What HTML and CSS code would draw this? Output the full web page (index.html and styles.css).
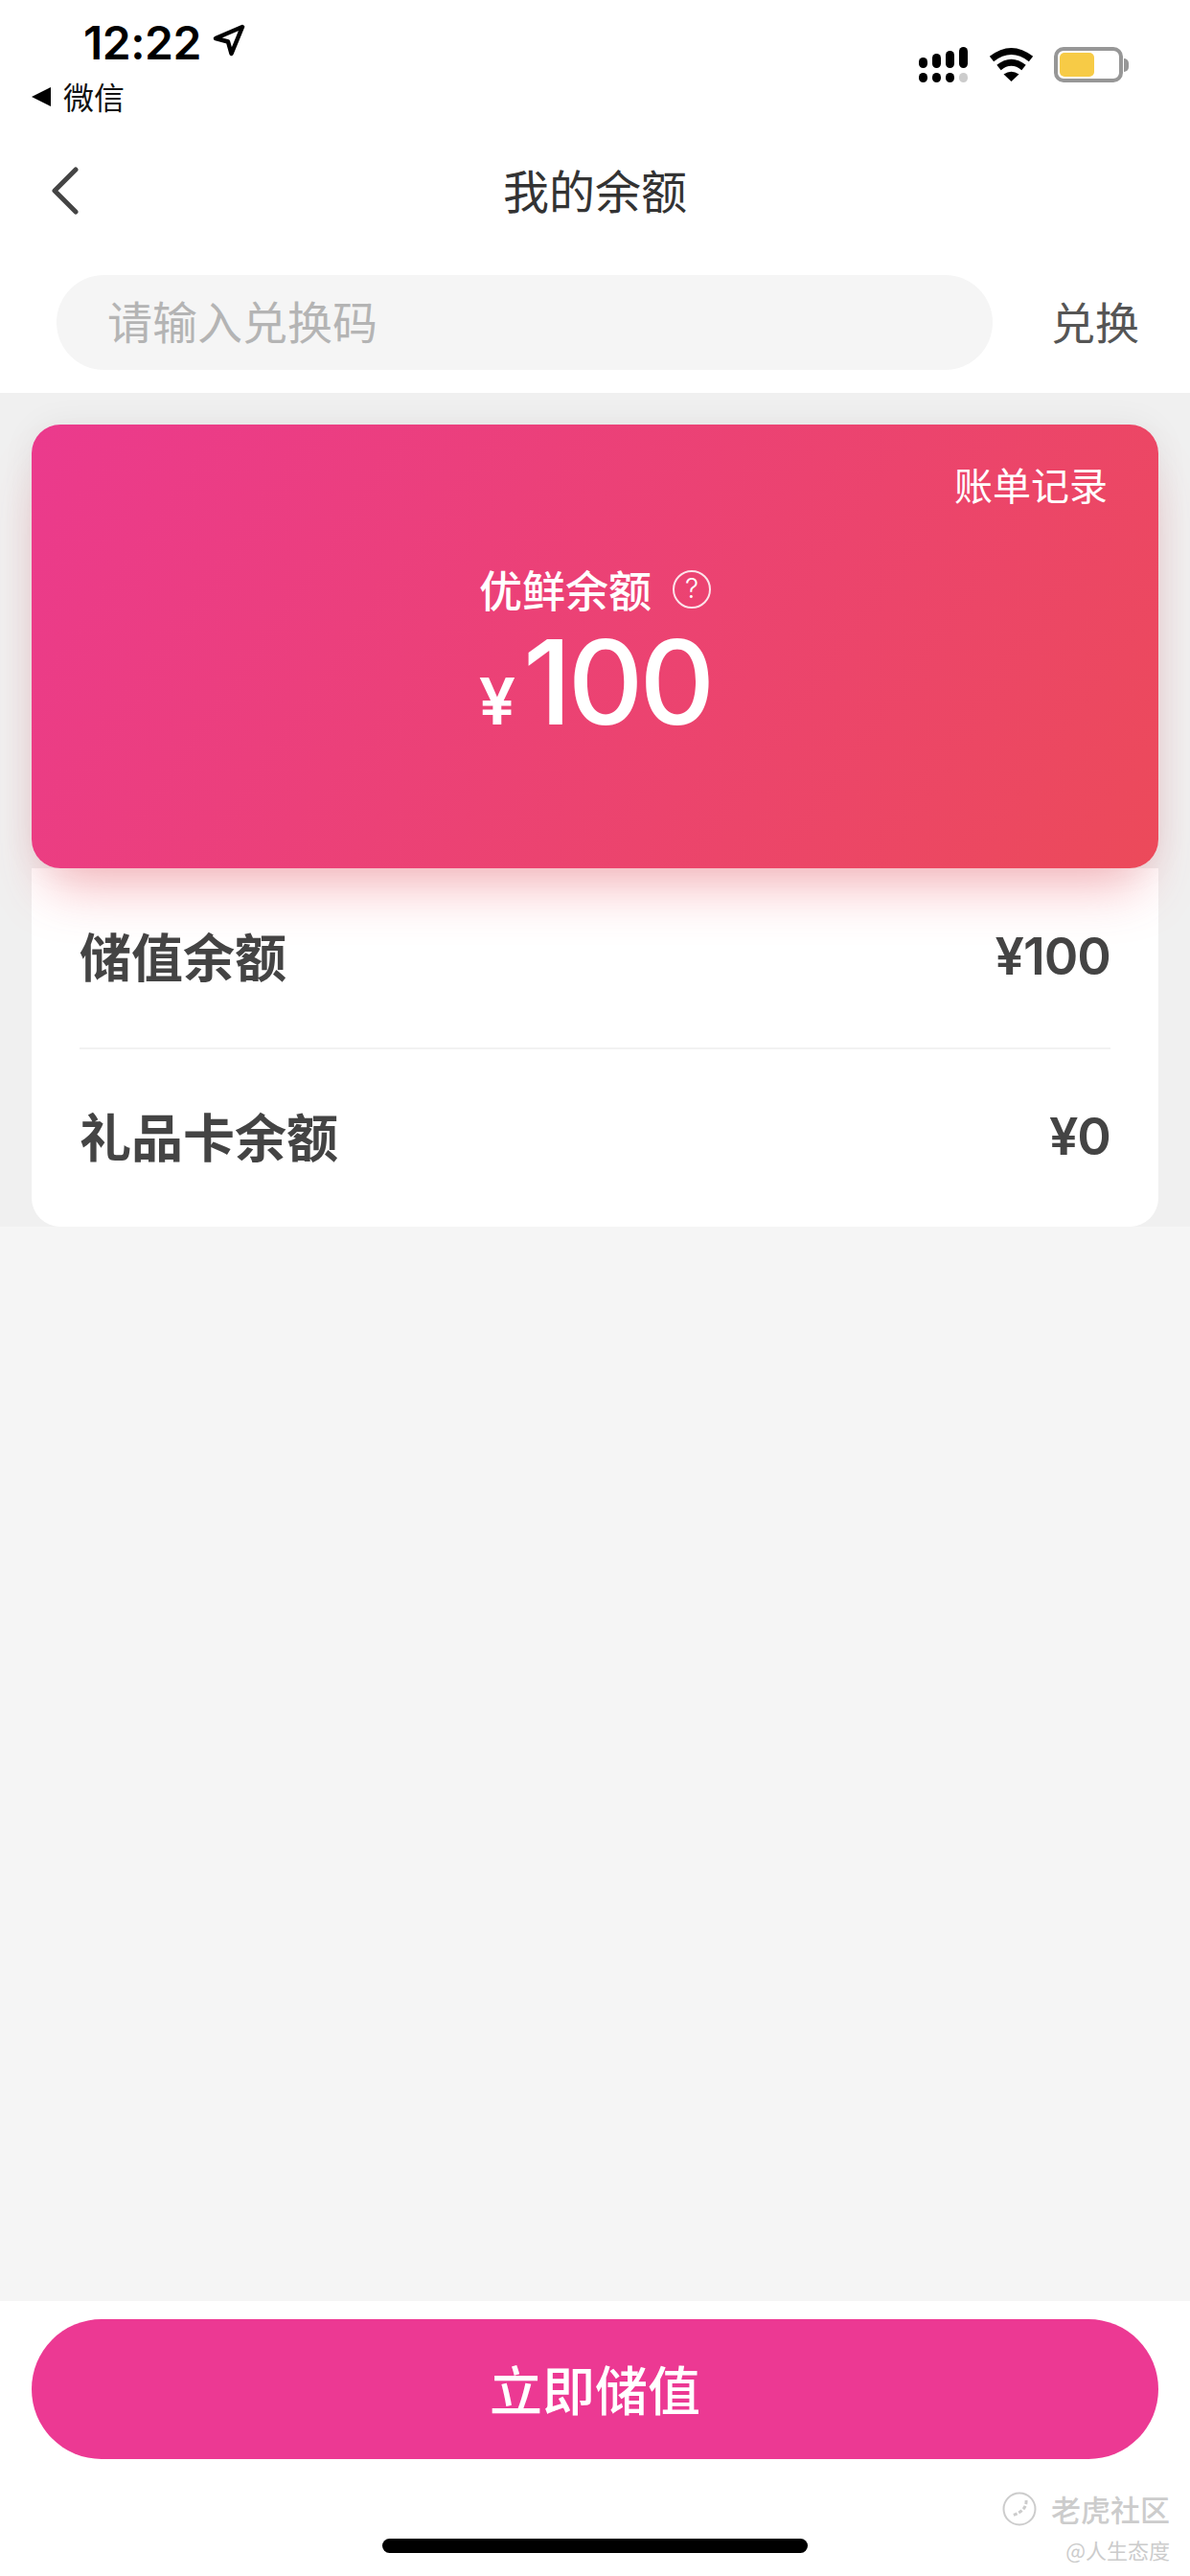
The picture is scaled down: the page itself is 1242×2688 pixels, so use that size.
FILE: index.html
```html
<!DOCTYPE html>
<html lang="zh-CN">
<head>
  <meta charset="UTF-8" />
  <meta name="viewport" content="width=device-width, initial-scale=1" />
  <title>我的余额</title>
  <link rel="stylesheet" href="styles.css">
</head>
<body>
  <div class="page">
    <header class="top">
      <div class="status">
        <div class="status-left">
          <div class="time-row">
            <span class="time">12:22</span>
            <svg class="arrow" width="34" height="34" viewBox="0 0 34 34"><path d="M31 3 L3 15 L16 18.5 L19.5 31 Z" fill="none" stroke="#000" stroke-width="4.5" stroke-linejoin="round"/></svg>
          </div>
          <div class="back-app">
            <span class="back-tri"></span>
            <span>微信</span>
          </div>
        </div>
        <div class="status-right">
          <svg width="51" height="37" viewBox="0 0 51 37">
            <rect x="0" y="11" width="9" height="11" rx="4.5"/>
            <rect x="14" y="7" width="9" height="15" rx="4.5"/>
            <rect x="28" y="4" width="9" height="18" rx="4.5"/>
            <rect x="42" y="0" width="9" height="22" rx="4.5"/>
            <rect x="0" y="27" width="9" height="10" rx="4.5"/>
            <rect x="14" y="27" width="9" height="10" rx="4.5"/>
            <rect x="28" y="27" width="9" height="10" rx="4.5"/>
            <rect x="42" y="27" width="9" height="10" rx="4.5" fill="#ccc"/>
          </svg>
          <svg width="47" height="36" viewBox="0 0 47 36">
            <path d="M3 12.5 Q23.5 -3.5 44 12.5" fill="none" stroke="#000" stroke-width="7"/>
            <path d="M10.5 21.5 Q23.5 11 36.5 21.5" fill="none" stroke="#000" stroke-width="7"/>
            <path d="M23.5 36 L15.5 28.5 Q23.5 23 31.5 28.5 Z"/>
          </svg>
          <div class="battery">
            <div class="battery-body"><div class="battery-fill"></div></div>
            <div class="battery-nub"></div>
          </div>
        </div>
      </div>

      <nav class="nav">
        <svg class="back" width="28" height="50" viewBox="0 0 28 50"><path d="M25 3 L3 25 L25 47" fill="none" stroke="#444" stroke-width="5" stroke-linecap="round" stroke-linejoin="round"/></svg>
        <h1 class="nav-title">我的余额</h1>
        <span></span>
      </nav>

      <div class="redeem">
        <div class="redeem-input">请输入兑换码</div>
        <span class="redeem-btn">兑换</span>
      </div>
    </header>

    <section class="balance">
      <div class="card">
        <div class="card-link">账单记录</div>
        <div class="card-label"><span>优鲜余额</span><span class="help">?</span></div>
        <div class="card-amount"><span class="yen">¥</span><span class="num">100</span></div>
      </div>
      <div class="details">
        <div class="row">
          <span class="row-name">储值余额</span>
          <span class="row-value">¥100</span>
        </div>
        <div class="row">
          <span class="row-name">礼品卡余额</span>
          <span class="row-value">¥0</span>
        </div>
      </div>
    </section>

    <main class="empty"></main>

    <footer class="bottom">
      <button class="charge-btn">立即储值</button>
      <div class="home-bar"></div>
    </footer>

    <div class="watermark">
      <div class="wm-main">
        <svg width="36" height="36" viewBox="0 0 36 36"><circle cx="18" cy="18" r="16.5" fill="none" stroke="#ccc" stroke-width="2"/><path d="M25 9 Q26 20 10 25" fill="none" stroke="#ccc" stroke-width="3" stroke-dasharray="4 2"/></svg>
        <span>老虎社区</span>
      </div>
      <div class="wm-user">@人生态度</div>
    </div>
  </div>
</body>
</html>
```

FILE: styles.css
```css
* {
  box-sizing: border-box;
}
body {
  margin: 0;
  font-family: "Noto Sans CJK SC", "Noto Sans", sans-serif;
  background: #f5f5f5;
}
.page {
  position: relative;
  width: 1242px;
  height: 2688px;
  display: flex;
  flex-direction: column;
  overflow: hidden;
}

/* top white part */
.top {
  background: #fff;
}
.status {
  height: 140px;
  display: flex;
  justify-content: space-between;
  padding-left: 33px;
  padding-right: 64px;
}
.status-left {
  padding-top: 20px;
}
.time-row {
  display: flex;
  align-items: center;
  height: 50px;
  margin-left: 54px;
}
.time {
  font-family: Inter, sans-serif;
  font-size: 48px;
  font-weight: 600;
  line-height: 50px;
  letter-spacing: -0.5px;
  color: #000;
}
.arrow {
  margin-left: 12px;
  margin-top: -6px;
}
.back-app {
  display: flex;
  align-items: center;
  margin-top: 10px;
  height: 40px;
  font-size: 32px;
  line-height: 40px;
  color: #111;
}
.back-tri {
  width: 0;
  height: 0;
  border-top: 10px solid transparent;
  border-bottom: 10px solid transparent;
  border-right: 20px solid #000;
  margin-right: 13px;
  margin-top: 2px;
}
.status-right {
  display: flex;
  align-items: flex-start;
  gap: 22px;
  padding-top: 49px;
}
.battery {
  display: flex;
  align-items: center;
  height: 37px;
  gap: 1px;
  margin-left: -1px;
}
.battery-body {
  width: 72px;
  height: 37px;
  border: 4px solid #979797;
  border-radius: 10px;
  padding: 2px;
}
.battery-fill {
  width: 36px;
  height: 100%;
  background: #f7cb46;
  border-radius: 5px;
}
.battery-nub {
  width: 5px;
  height: 14px;
  background: #979797;
  border-radius: 0 6px 6px 0;
}
.nav {
  height: 118px;
  display: grid;
  grid-template-columns: 1fr auto 1fr;
  align-items: center;
}
.back {
  margin-left: 54px;
}
.nav-title {
  margin: 0 0 5px;
  font-size: 48px;
  font-weight: 400;
  line-height: 60px;
  color: #333;
}
.redeem {
  display: flex;
  align-items: center;
  gap: 61px;
  padding: 29px 53px 24px 59px;
}
.redeem-input {
  flex: 1;
  min-width: 0;
  height: 99px;
  border-radius: 50px;
  background: #f5f5f5;
  padding: 0 53px 5px;
  font-size: 47px;
  line-height: 94px;
  color: #b4b4b4;
}
.redeem-btn {
  font-size: 46px;
  line-height: 60px;
  color: #555;
  padding-bottom: 5px;
}

/* balance card */
.balance {
  background: #f0f0f0;
  padding: 33px 33px 0;
}
.card {
  position: relative;
  height: 463px;
  padding-top: 40px;
  border-radius: 30px;
  background: linear-gradient(125deg, #eb3a8d, #ec4a5a);
  color: #fff;
  text-align: center;
  box-shadow: 0 36px 56px -18px rgba(238, 75, 90, 0.4), 0 0 36px rgba(0, 0, 0, 0.06);
}
.card-link {
  text-align: right;
  padding-right: 53px;
  font-size: 40px;
  line-height: 44px;
}
.card-label {
  margin-top: 63px;
  display: flex;
  justify-content: center;
  align-items: center;
  gap: 22px;
  font-size: 45px;
  font-weight: 500;
  line-height: 50px;
}
.help {
  width: 40px;
  height: 40px;
  border: 2.5px solid rgba(255, 255, 255, 0.85);
  border-radius: 50%;
  font-family: Inter, sans-serif;
  font-size: 28px;
  font-weight: 300;
  line-height: 35px;
  text-align: center;
}
.card-amount {
  display: flex;
  justify-content: center;
  align-items: baseline;
  gap: 8px;
  margin-top: 10px;
  font-family: Inter, sans-serif;
  line-height: 124px;
}
.yen {
  font-size: 68px;
  font-weight: 600;
}
.num {
  font-size: 122px;
  font-weight: 500;
  letter-spacing: -4px;
}
.details {
  height: 374px;
  background: #fff;
  border-radius: 0 0 30px 30px;
  padding: 0 50px;
}
.row {
  height: 187px;
  display: flex;
  justify-content: space-between;
  align-items: center;
}
.row + .row {
  border-top: 2px solid #f2f2f2;
}
.row-name {
  font-size: 54px;
  font-weight: 700;
  line-height: 70px;
  color: #444;
  padding-bottom: 6px;
}
.row-value {
  font-family: Inter, sans-serif;
  font-size: 54px;
  font-weight: 600;
  line-height: 70px;
  letter-spacing: -1px;
  color: #444;
  padding-bottom: 3px;
}

.empty {
  flex: 1;
  background: #f5f5f5;
}

/* bottom button */
.bottom {
  height: 287px;
  background: #fff;
  padding: 19px 33px 0;
}
.charge-btn {
  display: block;
  width: 100%;
  height: 146px;
  border: none;
  border-radius: 73px;
  background: #ec3993;
  color: #fff;
  font-family: inherit;
  font-size: 55px;
  font-weight: 500;
  padding: 0 0 5px;
}
.home-bar {
  width: 444px;
  height: 15px;
  margin: 83px auto 0;
  border-radius: 8px;
  background: #000;
}

.watermark {
  position: absolute;
  right: 21px;
  top: 2598px;
  text-align: right;
  color: #ccc;
}
.wm-main {
  display: flex;
  align-items: center;
  gap: 15px;
  font-size: 31px;
  font-weight: 500;
  line-height: 40px;
}
.wm-user {
  margin-top: 8px;
  font-size: 22px;
  line-height: 28px;
}
```
